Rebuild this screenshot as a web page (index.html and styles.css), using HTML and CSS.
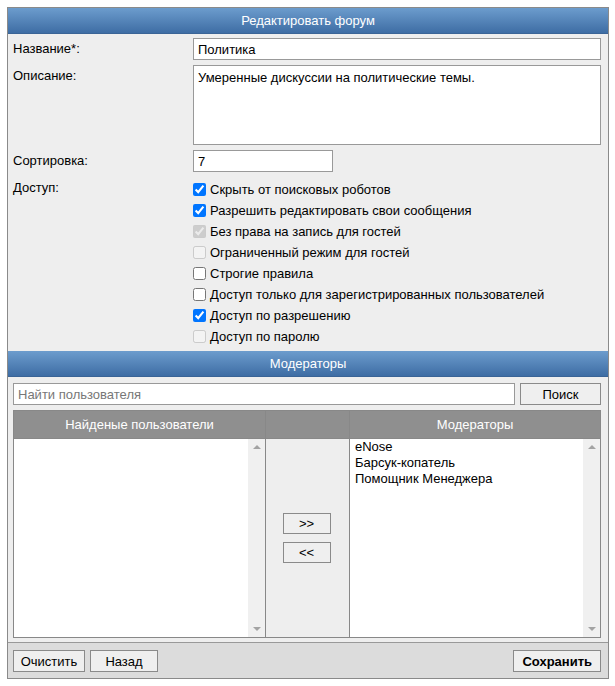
FILE: index.html
```html
<!DOCTYPE html>
<html lang="ru">
  <head>
    <meta charset="UTF-8" />
    <title>Редактировать форум</title>
    <link rel="stylesheet" href="styles.css">
  </head>
  <body>
    <div class="panel">
      <div class="panel-title">Редактировать форум</div>

      <div class="form-grid">
        <label for="name">Название*:</label>
        <input type="text" id="name" class="field" value="Политика" />

        <label for="desc">Описание:</label>
        <textarea id="desc" class="field area">Умеренные дискуссии на политические темы.</textarea>

        <label for="sort">Сортировка:</label>
        <div><input type="text" id="sort" class="field short" value="7" /></div>

        <label>Доступ:</label>
        <div class="checks">
          <label class="check"><input type="checkbox" checked /> Скрыть от поисковых роботов</label>
          <label class="check"><input type="checkbox" checked /> Разрешить редактировать свои сообщения</label>
          <label class="check"><input type="checkbox" checked disabled /> Без права на запись для гостей</label>
          <label class="check"><input type="checkbox" disabled /> Ограниченный режим для гостей</label>
          <label class="check"><input type="checkbox" /> Строгие правила</label>
          <label class="check"><input type="checkbox" /> Доступ только для зарегистрированных пользователей</label>
          <label class="check"><input type="checkbox" checked /> Доступ по разрешению</label>
          <label class="check"><input type="checkbox" disabled /> Доступ по паролю</label>
        </div>
      </div>

      <div class="panel-title">Модераторы</div>

      <div class="mods">
        <div class="search-row">
          <input type="text" class="field search" placeholder="Найти пользователя" />
          <button class="btn search-btn">Поиск</button>
        </div>

        <div class="picker">
          <div class="picker-head">Найденые пользователи</div>
          <div class="picker-head"></div>
          <div class="picker-head">Модераторы</div>

          <div class="list">
            <div class="list-items"></div>
            <div class="scrollbar"><span class="arrow up"></span><span class="arrow down"></span></div>
          </div>
          <div class="move">
            <button class="btn move-btn">&gt;&gt;</button>
            <button class="btn move-btn">&lt;&lt;</button>
          </div>
          <div class="list">
            <div class="list-items">
              <div>eNose</div>
              <div>Барсук-копатель</div>
              <div>Помощник Менеджера</div>
            </div>
            <div class="scrollbar"><span class="arrow up"></span><span class="arrow down"></span></div>
          </div>
        </div>
      </div>

      <div class="footer">
        <button class="btn clear-btn">Очистить</button>
        <button class="btn back-btn">Назад</button>
        <button class="btn save-btn">Сохранить</button>
      </div>
    </div>
  </body>
</html>
```

FILE: styles.css
```css
body {
  margin: 0;
  padding: 7px;
  font-family: "Liberation Sans", Arial, sans-serif;
  font-size: 13px;
  color: #000;
  background: #fff;
}
.panel {
  width: 600px;
  border: 1px solid #8a8a8a;
  background-color: #eeeeee;
}
.panel-title {
  height: 26px;
  line-height: 26px;
  text-align: center;
  color: #fff;
  font-size: 13px;
  background: linear-gradient(#6c9ccd, #3e6da4);
  border-bottom: 1px solid #3a6496;
  box-sizing: border-box;
}
.form-grid {
  display: grid;
  grid-template-columns: 180px 1fr;
  row-gap: 5px;
  padding: 4px 7px 4px 5px;
}
.form-grid > label {
  line-height: 16px;
  padding-top: 3px;
}
.field {
  font-family: inherit;
  font-size: 13px;
  border: 1px solid #999;
  background: #fff;
  height: 22px;
  padding: 0 4px;
  margin: 0;
  box-sizing: border-box;
  width: 100%;
  outline: none;
}
.area {
  height: 80px;
  padding: 4px;
  resize: none;
}
.short {
  width: 140px;
}
.checks {
  padding-top: 2px;
}
.check {
  display: flex;
  align-items: center;
  height: 21px;
}
.check input {
  margin: 0 4px 0 0;
  width: 13px;
  height: 13px;
}
.mods {
  padding: 6px 7px 4px 5px;
}
.search-row {
  display: flex;
  gap: 5px;
}
.search::placeholder {
  color: #777;
}
.btn {
  font-family: inherit;
  font-size: 13px;
  height: 22px;
  padding: 0 8px;
  background-color: #efefef;
  border: 1px solid #8a8a8a;
  color: #000;
  cursor: pointer;
}
.search-btn {
  width: 81px;
  flex: none;
}
.picker {
  margin-top: 5px;
  display: grid;
  grid-template-columns: 251px 83px 1fr;
  grid-template-rows: 27px 198px;
  border: 1px solid #888;
  background-color: #888;
  gap: 1px;
}
.picker-head {
  background-color: #8f8f8f;
  color: #fff;
  text-align: center;
  line-height: 27px;
}
.list {
  display: flex;
  background: #fff;
}
.list-items {
  flex: 1;
  padding: 0 5px;
  line-height: 16px;
}
.scrollbar {
  width: 17px;
  background-color: #f0f0f0;
  position: relative;
}
.arrow {
  position: absolute;
  left: 5px;
  width: 0;
  height: 0;
  border-left: 4px solid transparent;
  border-right: 4px solid transparent;
}
.arrow.up {
  top: 6px;
  border-bottom: 4px solid #a3a3a3;
}
.arrow.down {
  bottom: 6px;
  border-top: 4px solid #a3a3a3;
}
.move {
  background-color: #eeeeee;
  display: flex;
  flex-direction: column;
  align-items: center;
  justify-content: center;
  gap: 8px;
}
.move-btn {
  width: 48px;
  height: 21px;
  padding: 0;
  margin-right: 2px;
}
.footer {
  display: flex;
  gap: 5px;
  padding: 7px 7px 6px 5px;
  background-color: #dcdcdc;
  border-top: 1px solid #999;
}
.clear-btn {
  width: 72px;
  padding: 0;
}
.back-btn {
  width: 68px;
}
.save-btn {
  margin-left: auto;
  font-weight: bold;
}
```
